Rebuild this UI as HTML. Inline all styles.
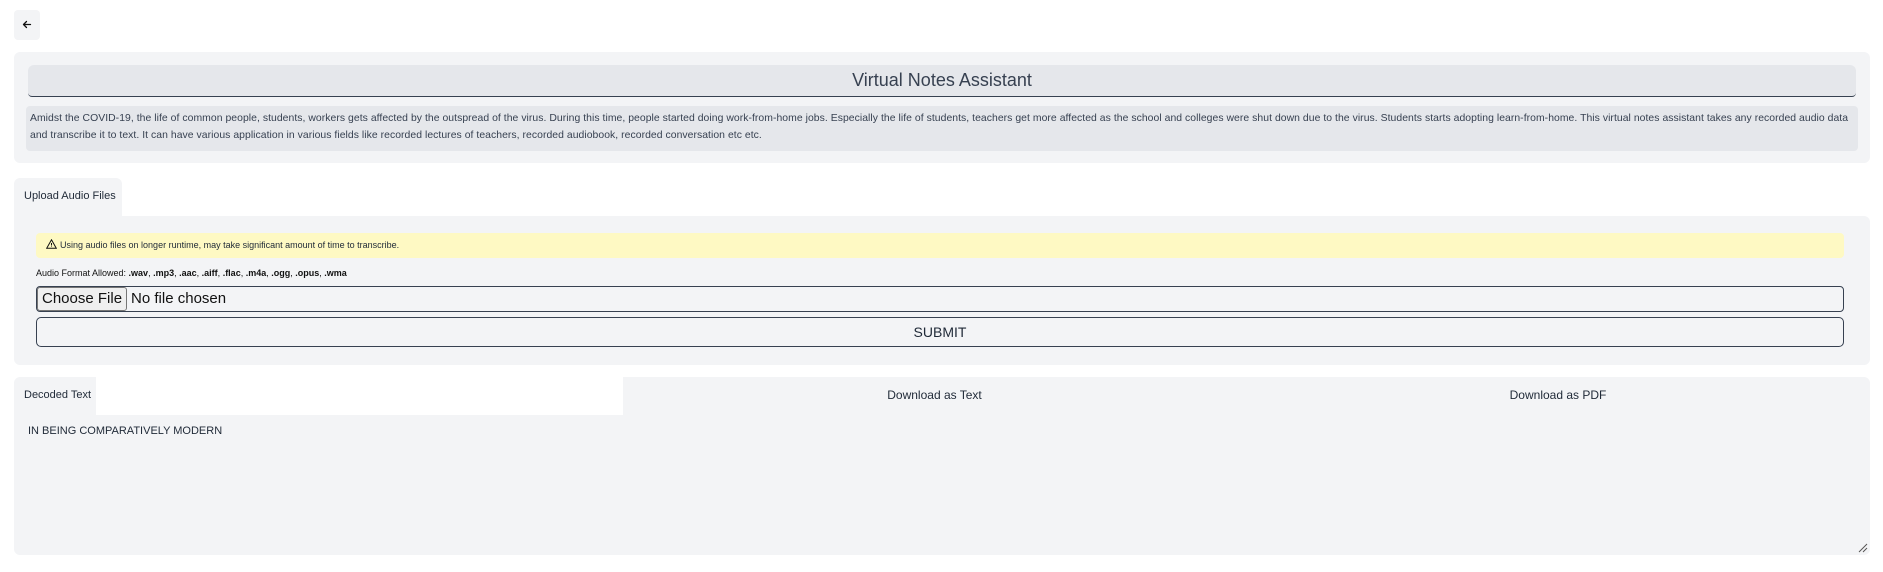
<!DOCTYPE html>
<html><head><meta charset="utf-8"><style>
*{box-sizing:border-box;margin:0;padding:0}
body{width:1883px;height:572px;background:#fff;font-family:"Liberation Sans","DejaVu Sans",sans-serif;color:#374151;position:relative;overflow:hidden}
.abs{position:absolute;white-space:nowrap}
.back{left:14px;top:10px;width:26px;height:30px;background:#f3f4f6;border-radius:4px}
.panel{background:#f3f4f6;border-radius:6px}
</style></head><body>
<div class="abs back"><svg width="26" height="30" viewBox="0 0 26 30"><path d="M9.5 14.5 L16.5 14.5 M9.5 14.5 L12.5 11.5 M9.5 14.5 L12.5 17.5" stroke="#111" stroke-width="1.3" fill="none" stroke-linecap="round"/></svg></div>

<div class="abs panel" style="left:14px;top:52px;width:1856px;height:111px"></div>
<div class="abs" style="left:28px;top:65px;width:1828px;height:32px;background:#e5e7eb;border-radius:6px 6px 4px 4px;border-bottom:1.5px solid #374151;text-align:center;font-size:18px;line-height:31px;color:#374151">Virtual Notes Assistant</div>
<div class="abs" style="white-space:normal;left:26px;top:106px;width:1832px;height:45px;background:#e5e7eb;border-radius:4px;padding:4px 4px;font-size:10.4px;letter-spacing:0.05px;line-height:17px;color:#374151">Amidst the COVID-19, the life of common people, students, workers gets affected by the outspread of the virus. During this time, people started doing work-from-home jobs. Especially the life of students, teachers get more affected as the school and colleges were shut down due to the virus. Students starts adopting learn-from-home. This virtual notes assistant takes any recorded audio data and transcribe it to text. It can have various application in various fields like recorded lectures of teachers, recorded audiobook, recorded conversation etc etc.</div>

<div class="abs panel" style="left:14px;top:178px;width:108px;height:45px;border-radius:6px 6px 0 0;font-size:11px;padding:12px 0 0 10px;color:#1f2937">Upload Audio Files</div>
<div class="abs panel" style="left:14px;top:216px;width:1856px;height:149px;border-radius:0 6px 6px 6px"></div>
<div class="abs" style="left:36px;top:233px;width:1808px;height:25px;background:#fef9c3;border-radius:4px;font-size:9px;line-height:25px;padding-left:10px;color:#1f2937"><svg width="11" height="10" viewBox="0 0 11 10" style="vertical-align:-1px;margin-right:3px"><path d="M5.5 0.8 L10.3 9.3 L0.7 9.3 Z M5.5 4 V6.5 M5.5 7.5 V8" stroke="#111" stroke-width="1" fill="none"/></svg>Using audio files on longer runtime, may take significant amount of time to transcribe.</div>
<div class="abs" style="left:36px;top:268px;font-size:9px;color:#111">Audio Format Allowed: <b>.wav</b>, <b>.mp3</b>, <b>.aac</b>, <b>.aiff</b>, <b>.flac</b>, <b>.m4a</b>, <b>.ogg</b>, <b>.opus</b>, <b>.wma</b></div>
<div class="abs" style="left:36px;top:286px;width:1808px;height:26px;border:1px solid #374151;border-radius:4px;font-size:15px;line-height:24px;color:#111"><span style="display:inline-block;background:#efefef;border:1px solid #767676;border-radius:3px;height:24px;padding:0 4px;margin:0 4px 0 0;vertical-align:top;line-height:22px">Choose File</span>No file chosen</div>
<div class="abs" style="left:36px;top:317px;width:1808px;height:30px;border:1px solid #374151;border-radius:5px;text-align:center;font-size:14px;line-height:28px;color:#1f2937">SUBMIT</div>

<div class="abs panel" style="left:14px;top:377px;width:1856px;height:178px;border-radius:6px"></div>
<div class="abs" style="left:96px;top:377px;width:527px;height:38px;background:#fff"></div>
<div class="abs" style="left:14px;top:377px;width:82px;height:38px;font-size:11px;padding:12px 0 0 10px;color:#1f2937">Decoded Text</div>
<div class="abs" style="left:623px;top:377px;width:623px;height:38px;text-align:center;font-size:12px;line-height:36px;color:#1f2937">Download as Text</div>
<div class="abs" style="left:1246px;top:377px;width:624px;height:38px;text-align:center;font-size:12px;line-height:36px;color:#1f2937">Download as PDF</div>
<div class="abs" style="left:28px;top:425px;font-size:11px;color:#1f2937">IN BEING COMPARATIVELY MODERN</div>
<svg class="abs" style="left:1858px;top:543px" width="10" height="10" viewBox="0 0 10 10"><path d="M1 9 L9 1 M5 9 L9 5" stroke="#555" stroke-width="1"/></svg>
</body></html>
